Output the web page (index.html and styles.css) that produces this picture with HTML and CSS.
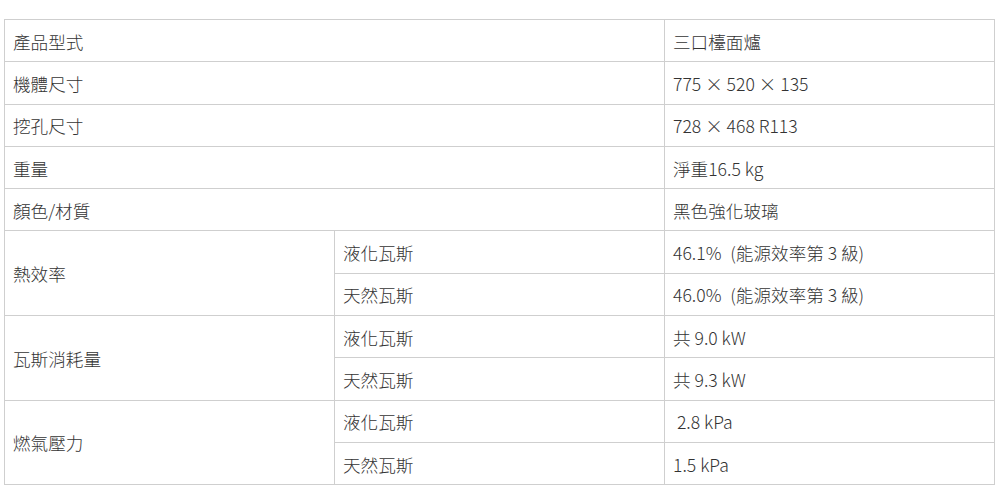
FILE: index.html
```html
<!DOCTYPE html>
<html lang="zh-Hant">
<head>
<meta charset="utf-8">
<link rel="stylesheet" href="styles.css">
</head>
<body>
<table class="spec">
  <colgroup><col class="c1"><col class="c2"><col class="c3"></colgroup>
  <tr><td colspan="2">產品型式</td><td>三口檯面爐</td></tr>
  <tr><td colspan="2">機體尺寸</td><td>775 × 520 × 135</td></tr>
  <tr><td colspan="2">挖孔尺寸</td><td>728 × 468 R113</td></tr>
  <tr><td colspan="2">重量</td><td>淨重16.5 kg</td></tr>
  <tr><td colspan="2">顏色/材質</td><td>黑色強化玻璃</td></tr>
  <tr><td rowspan="2">熱效率</td><td>液化瓦斯</td><td>46.1% <span class="paren">(能源效率第 3 級)</span></td></tr>
  <tr><td>天然瓦斯</td><td>46.0% <span class="paren">(能源效率第 3 級)</span></td></tr>
  <tr><td rowspan="2">瓦斯消耗量</td><td>液化瓦斯</td><td>共 9.0 kW</td></tr>
  <tr><td>天然瓦斯</td><td>共 9.3 kW</td></tr>
  <tr><td rowspan="2">燃氣壓力</td><td>液化瓦斯</td><td>&nbsp;2.8 kPa</td></tr>
  <tr><td>天然瓦斯</td><td>1.5 kPa</td></tr>
</table>
</body>
</html>
```
FILE: styles.css
```css
html, body {
  margin: 0;
  padding: 0;
  background: #fff;
}
body {
  padding: 19px 5px 0 4px;
  font-family: "Noto Sans CJK TC", "Noto Sans", sans-serif;
  font-size: 17.6px;
  font-weight: 300;
  color: #333;
}
.spec {
  width: 991px;
  border-collapse: collapse;
  table-layout: fixed;
  border: 1px solid #bdbdbd;
}
.c1, .c2 { width: 330px; }
.spec td {
  border: 1px solid #cfcfcf;
  height: 41px;
  padding: 2px 8px 0;
  vertical-align: middle;
  line-height: 22px;
  box-sizing: border-box;
}
.spec tr { height: 42.3px; }
.paren { margin-left: 5px; }
```
